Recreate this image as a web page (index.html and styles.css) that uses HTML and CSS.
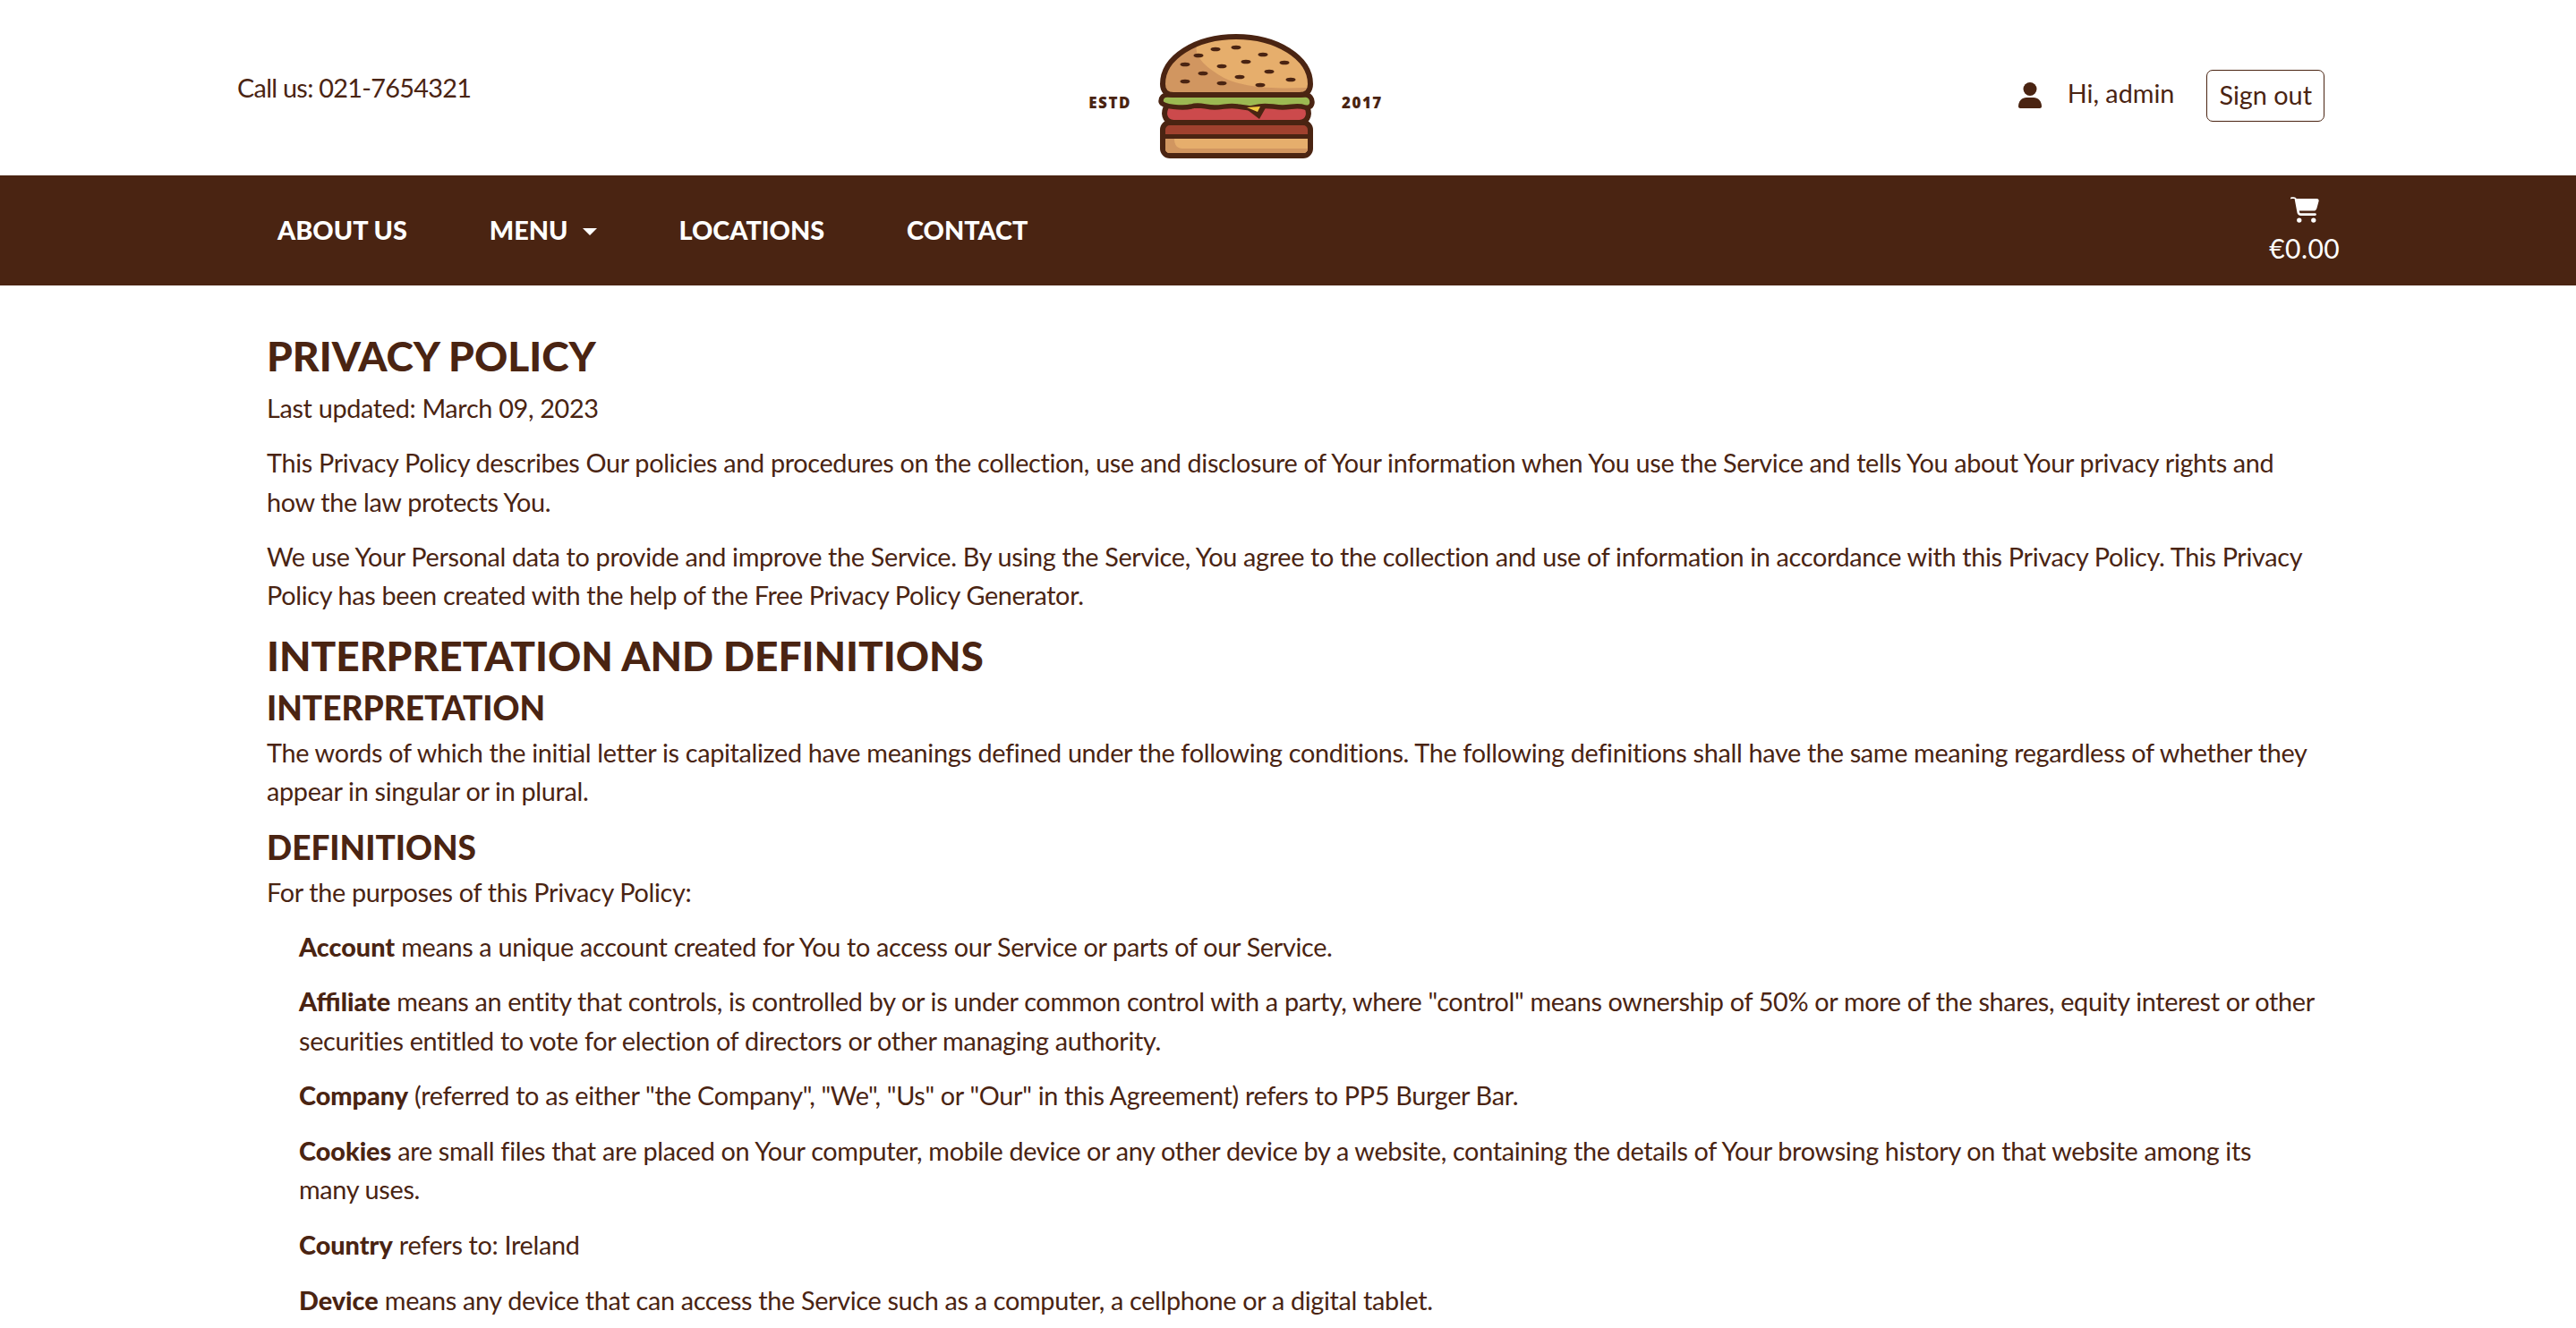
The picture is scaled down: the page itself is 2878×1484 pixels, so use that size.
FILE: index.html
```html
<!DOCTYPE html>
<html lang="en">
<head>
  <meta charset="UTF-8">
  <title>Privacy Policy - PP5 Burger Bar</title>
  <link rel="stylesheet" href="styles.css">
</head>
<body>

  <!-- TOP HEADER -->
  <header class="topbar">
    <div class="call">Call us: 021-7654321</div>
    <a class="logo" href="#">
      <span class="logo-tag">ESTD</span>
      <svg class="burger" viewBox="0 0 175 139" width="175" height="139">
        <!-- bottom layers -->
        <rect x="5" y="99" width="165" height="37" rx="8" fill="#a0412e" stroke="#4a2412" stroke-width="6"/>
        <path d="M8 117h159v11c0 3-2 5-5 5H13c-3 0-5-2-5-5z" fill="#e6ae6c"/>
        <path d="M8 117h10c0 7 3 11 9 11h140c0 3-2 5-5 5H13c-3 0-5-2-5-5z" fill="#d19660"/>
        <path d="M6 114.500h163" stroke="#4a2412" stroke-width="5"/>
        <!-- patty -->
        <path d="M10 80h155c5 7 4 18-7 19H17c-11-1-12-12-7-19z" fill="#cc4a4c" stroke="#4a2412" stroke-width="6" stroke-linejoin="round"/>
        <!-- cheese -->
        <path d="M92 79l30 0 -9 16z" fill="#4a2412"/>
        <!-- lettuce -->
        <path d="M10 68h155c4 0 7 4 7 8 0 5-4 7-8 6-9-3-15 0-25 0-10 0-17-3-26-1l-10 2-14-2c-10-2-16 1-26 1-10 0-17-4-26-1-8 2-34 1-34-6 0-4 3-7 7-7z" fill="#9cb952" stroke="#4a2412" stroke-width="5.500" stroke-linejoin="round"/>
        <path d="M99 82l15-1-3 6z" fill="#f0c93f"/>
        <!-- bun top -->
        <path d="M5 56C5 26 42 3 87 3s83 23 83 53c0 8-5 12-12 12H17C10 68 5 64 5 56z" fill="#e6ae6c"/>
        <path d="M43 12C28 18 8 36 8 56c0 6 4 9 9 9h141c4 0 7-2 8-5-46 2-78-2-96-13C52 36 40 25 43 12z" fill="#d19660"/>
        <path d="M5 56C5 26 42 3 87 3s83 23 83 53c0 8-5 12-12 12H17C10 68 5 64 5 56z" fill="none" stroke="#4a2412" stroke-width="6"/>
        <g fill="#4a2412">
          <ellipse cx="64" cy="17" rx="5.500" ry="2.300"/><ellipse cx="87" cy="15" rx="5.500" ry="2.300"/>
          <ellipse cx="45" cy="24" rx="5.500" ry="2.300"/><ellipse cx="117" cy="23" rx="5.500" ry="2.300"/>
          <ellipse cx="30" cy="34" rx="5.500" ry="2.300"/><ellipse cx="71" cy="36" rx="5.500" ry="2.300"/>
          <ellipse cx="98" cy="31" rx="5.500" ry="2.300"/><ellipse cx="141" cy="32" rx="5.500" ry="2.300"/>
          <ellipse cx="50" cy="44" rx="5.500" ry="2.300"/><ellipse cx="124" cy="42" rx="5.500" ry="2.300"/>
          <ellipse cx="91" cy="48" rx="5.500" ry="2.300"/><ellipse cx="30" cy="53" rx="5.500" ry="2.300"/>
          <ellipse cx="71" cy="55" rx="5.500" ry="2.300"/><ellipse cx="114" cy="57" rx="5.500" ry="2.300"/>
          <ellipse cx="148" cy="51" rx="5.500" ry="2.300"/>
        </g>
      </svg>
      <span class="logo-tag">2017</span>
    </a>
    <div class="account">
      <svg class="user-icon" viewBox="0 0 26 29" width="26" height="29">
        <circle cx="13" cy="7.500" r="7.500"/>
        <path d="M0 27c0-6 4-10 9-10h8c5 0 9 4 9 10 0 1-1 2-2 2H2c-1 0-2-1-2-2z"/>
      </svg>
      <span class="hello">Hi, admin</span>
      <a class="signout" href="#">Sign out</a>
    </div>
  </header>

  <!-- NAV -->
  <nav class="navbar">
    <ul class="nav-links">
      <li><a href="#">About us</a></li>
      <li><a href="#" class="dropdown">Menu</a></li>
      <li><a href="#">Locations</a></li>
      <li><a href="#">Contact</a></li>
    </ul>
    <a class="cart" href="#">
      <svg viewBox="0 0 576 512" width="32" height="29"><path d="M0 24C0 11 11 0 24 0h45c22 0 42 13 51 32h411c26 0 45 25 38 50l-41 146c-8 28-33 47-62 47H177l5 29c2 11 12 20 24 20h290c13 0 24 11 24 24s-11 24-24 24H206c-35 0-65-25-71-59L83 35c-1-2-3-3-5-3H24C11 48 0 37 0 24zm128 440a48 48 0 1 1 96 0 48 48 0 1 1-96 0zm336-48a48 48 0 1 1 0 96 48 48 0 1 1 0-96z"/></svg>
      <span class="price">€0.00</span>
    </a>
  </nav>

  <!-- PAGE -->
  <main class="page">
    <h1>Privacy Policy</h1>
    <p>Last updated: March 09, 2023</p>
    <p>This Privacy Policy describes Our policies and procedures on the collection, use and disclosure of Your information when You use the Service and tells You about Your privacy rights and how the law protects You.</p>
    <p>We use Your Personal data to provide and improve the Service. By using the Service, You agree to the collection and use of information in accordance with this Privacy Policy. This Privacy Policy has been created with the help of the Free Privacy Policy Generator.</p>
    <h2>Interpretation and Definitions</h2>
    <h3>Interpretation</h3>
    <p>The words of which the initial letter is capitalized have meanings defined under the following conditions. The following definitions shall have the same meaning regardless of whether they appear in singular or in plural.</p>
    <h3>Definitions</h3>
    <p>For the purposes of this Privacy Policy:</p>
    <ul class="terms">
      <li><p><strong>Account</strong> means a unique account created for You to access our Service or parts of our Service.</p></li>
      <li><p><strong>Affiliate</strong> means an entity that controls, is controlled by or is under common control with a party, where "control" means ownership of 50% or more of the shares, equity interest or other securities entitled to vote for election of directors or other managing authority.</p></li>
      <li><p><strong>Company</strong> (referred to as either "the Company", "We", "Us" or "Our" in this Agreement) refers to PP5 Burger Bar.</p></li>
      <li><p><strong>Cookies</strong> are small files that are placed on Your computer, mobile device or any other device by a website, containing the details of Your browsing history on that website among its many&nbsp;uses.</p></li>
      <li><p><strong>Country</strong> refers to: Ireland</p></li>
      <li><p><strong>Device</strong> means any device that can access the Service such as a computer, a cellphone or a digital tablet.</p></li>
    </ul>
  </main>

</body>
</html>
```

FILE: styles.css
```css
/* ------------- BASE ------------- */
* { margin: 0; padding: 0; box-sizing: border-box; }
html, body { height: 100%; overflow: hidden; }
body {
  font-family: 'Lato', 'Liberation Sans', sans-serif;
  font-size: 28.8px;
  line-height: 43.2px;
  color: #4a2412;
  background: #fff;
}
a { color: inherit; text-decoration: none; }
ul { list-style: none; }

/* ------------- TOP HEADER ------------- */
.topbar {
  height: 196px;
  padding: 0 281px 0 265px;
  display: flex;
  justify-content: space-between;
}
.call { padding-top: 77px; letter-spacing: -0.7px; }
.logo {
  display: flex;
  align-items: flex-start;
  gap: 30px;
  padding-top: 38px;
  margin-right: 20px;
}
.logo-tag {
  font-family: 'Open Sans', sans-serif;
  font-weight: 800;
  font-size: 17px;
  line-height: 20px;
  letter-spacing: 1.5px;
  margin-top: 67px;
}
.burger { display: block; }
.account {
  display: flex;
  align-items: flex-start;
  padding-top: 78px;
}
.user-icon { fill: #4a2412; margin-top: 14px; margin-right: 29px; }
.hello { margin-right: 36px; padding-top: 5px; }
.signout {
  border: 1.5px solid #4a2412;
  border-radius: 7px;
  padding: 6px 13px;
  height: 58px;
}

/* ------------- NAV ------------- */
.navbar {
  height: 123px;
  background: #4a2412;
  color: #fff;
  padding: 0 264px 0 310px;
  display: flex;
  align-items: center;
  justify-content: space-between;
}
.nav-links { display: flex; gap: 92px; }
.nav-links a {
  font-weight: 900;
  text-transform: uppercase;
}
.dropdown::after {
  content: "";
  display: inline-block;
  margin-left: 16px;
  vertical-align: 5px;
  border-top: 8px solid #fff;
  border-left: 8px solid transparent;
  border-right: 8px solid transparent;
}
.cart {
  display: flex;
  flex-direction: column;
  align-items: center;
  gap: 7px;
  padding-top: 4px;
}
.cart svg { fill: #fff; display: block; }
.price { font-size: 30px; letter-spacing: 0.4px; }

/* ------------- PAGE ------------- */
.page { padding: 51px 301px 0 298px; letter-spacing: -0.32px; }
.page h1, .page h2, .page h3 {
  font-weight: 900;
  text-transform: uppercase;
  line-height: 1.2;
  letter-spacing: 0;
}
.page h1 { font-size: 46px; margin-bottom: 10px; }
.page h2 { font-size: 46px; margin-bottom: 9px; }
.page h3 { font-size: 37px; margin-bottom: 6.5px; }
.page p { margin-bottom: 18px; }
.terms { padding-left: 36px; margin-right: -16px; }
.terms p { margin-bottom: 18.5px; }
.page strong { font-weight: 900; letter-spacing: 0; }
```
